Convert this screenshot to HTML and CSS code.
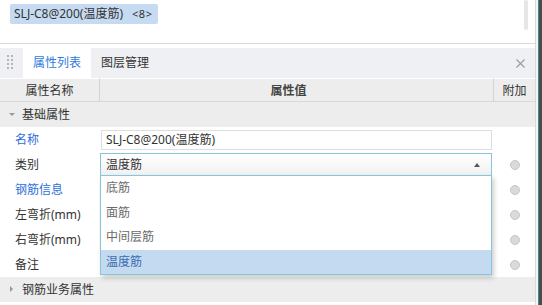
FILE: index.html
```html
<!DOCTYPE html>
<html lang="zh-CN">
<head>
  <meta charset="UTF-8" />
  <title>属性列表</title>
  <link rel="stylesheet" href="styles.css">
</head>
<body>

<div class="main">
  <div class="top">
    <span class="tag">SLJ-C8@200(温度筋)<span class="count">&lt;8&gt;</span></span>
    <span class="scroll-thumb"></span>
  </div>

  <div class="panel">
    <div class="tabbar">
      <svg class="grip" width="6" height="16" viewBox="0 0 6 16">
        <rect x="0" y="0" width="2" height="2"/><rect x="4" y="0" width="2" height="2"/>
        <rect x="0" y="4" width="2" height="2"/><rect x="4" y="4" width="2" height="2"/>
        <rect x="0" y="8" width="2" height="2"/><rect x="4" y="8" width="2" height="2"/>
        <rect x="0" y="12" width="2" height="2"/><rect x="4" y="12" width="2" height="2"/>
      </svg>
      <span class="tab active">属性列表</span>
      <span class="tab">图层管理</span>
      <svg class="close" width="9" height="9" viewBox="0 0 9 9">
        <path d="M0.5 0.5 L8.5 8.5 M8.5 0.5 L0.5 8.5" stroke="#9a9a9a" stroke-width="1.1" fill="none"/>
      </svg>
    </div>

    <div class="grid">
      <div class="hd">属性名称</div>
      <div class="hd hd-mid">属性值</div>
      <div class="hd hd-last">附加</div>

      <div class="group"><span class="arrow down"></span>基础属性</div>

      <div class="label blue">名称</div>
      <div class="value"><div class="input">SLJ-C8@200(温度筋)</div></div>
      <div class="extra"></div>

      <div class="label">类别</div>
      <div class="value">
        <div class="select-wrap">
          <div class="select">温度筋<span class="caret"></span></div>
          <ul class="dropdown">
            <li>底筋</li>
            <li>面筋</li>
            <li>中间层筋</li>
            <li class="selected">温度筋</li>
          </ul>
        </div>
      </div>
      <div class="extra"><span class="radio"></span></div>

      <div class="label blue">钢筋信息</div>
      <div class="value"></div>
      <div class="extra"><span class="radio"></span></div>

      <div class="label">左弯折(mm)</div>
      <div class="value"></div>
      <div class="extra"><span class="radio"></span></div>

      <div class="label">右弯折(mm)</div>
      <div class="value"></div>
      <div class="extra"><span class="radio"></span></div>

      <div class="label">备注</div>
      <div class="value"></div>
      <div class="extra"><span class="radio"></span></div>

      <div class="group"><span class="arrow right"></span>钢筋业务属性</div>
    </div>
  </div>
</div>
<div class="strip"></div>

</body>
</html>
```

FILE: styles.css
```css
:root {
  --text: #333333;
  --blue: #2e6fd8;
  --line: #d9d9d9;
  --head-bg: #ededed;
  --tab-bg: #eef0f3;
  --focus: #86c6dc;
}

body {
  margin: 0;
  display: flex;
  height: 305px;
  overflow: hidden;
  font-family: "Noto Sans", "Noto Sans CJK SC", sans-serif;
  font-size: 12px;
  color: var(--text);
  background: #f4f4f4;
}

.main {
  width: 535px;
  background: #fff;
  border-right: 1px solid var(--line);
  display: flex;
  flex-direction: column;
}

.strip {
  width: 4px;
  margin-left: 2px;
  background: #4a4c4c;
  border-left: 1px solid #3e8f8c;
}

.top {
  height: 43px;
  border-bottom: 1px solid var(--line);
  display: flex;
  align-items: flex-start;
  padding: 0 7px 0 10px;
}

.tag {
  margin-top: 4px;
  height: 20px;
  line-height: 20px;
  padding: 0 6px 0 4px;
  background: #c6dbf1;
  border-radius: 2px;
  color: #333;
  white-space: nowrap;
}

.count {
  margin-left: 9px;
  font-size: 11px;
  letter-spacing: 0.5px;
}

.scroll-thumb {
  margin-left: auto;
  width: 4px;
  height: 30px;
  background: #e6e6e6;
  border-radius: 2px;
}

.panel {
  margin-top: 4px;
  flex: 1;
  position: relative;
}

.tabbar {
  height: 30px;
  background: var(--tab-bg);
  display: flex;
  align-items: center;
  padding-left: 7px;
  padding-right: 10px;
}

.grip {
  fill: #b5b5b5;
  margin-right: 10px;
}

.tab {
  height: 30px;
  line-height: 30px;
  padding: 0 10px;
  color: var(--text);
}

.tab.active {
  background: #fff;
  color: #2f7be0;
}

.close {
  margin-left: auto;
}

.grid {
  display: grid;
  grid-template-columns: 100px 394px 41px;
  grid-template-rows: 24px;
  grid-auto-rows: 25px;
}

.hd {
  line-height: 23px;
  background: var(--head-bg);
  text-align: center;
  border-top: 1px solid #fff;
  border-bottom: 1px solid #d8d8d8;
  border-right: 1px solid #d4d4d4;
  box-sizing: border-box;
}

.hd-last {
  border-right: none;
}

.hd-mid {
  font-weight: bold;
  color: #444;
  padding-right: 16px;
}

.group {
  grid-column: 1 / -1;
  background: var(--head-bg);
  line-height: 25px;
  padding-left: 22px;
  position: relative;
}

.arrow {
  position: absolute;
  left: 9px;
  top: 11px;
  width: 0;
  height: 0;
}

.arrow.down {
  border-left: 3px solid transparent;
  border-right: 3px solid transparent;
  border-top: 3px solid #999;
}

.arrow.right {
  left: 10px;
  top: 9px;
  border-top: 3px solid transparent;
  border-bottom: 3px solid transparent;
  border-left: 3px solid #999;
}

.label {
  line-height: 25px;
  padding-left: 15px;
  white-space: nowrap;
}

.label.blue {
  color: var(--blue);
}

.value {
  padding: 0 2px 0 0;
  display: flex;
  align-items: center;
}

.input {
  flex: 1;
  margin-left: 1px;
  height: 18px;
  line-height: 18px;
  border: 1px solid #dedede;
  padding-left: 4px;
  color: #333;
}

.select-wrap {
  flex: 1;
  position: relative;
}

.select {
  height: 21px;
  line-height: 21px;
  border: 1px solid var(--focus);
  padding-left: 5px;
  background: linear-gradient(#ffffff, #f1f1f1);
  position: relative;
}

.caret {
  position: absolute;
  right: 11px;
  top: 9px;
  border-left: 3px solid transparent;
  border-right: 3px solid transparent;
  border-bottom: 4px solid #555;
}

.dropdown {
  position: absolute;
  left: 0;
  right: 0;
  top: 22px;
  margin: 0;
  padding: 0;
  list-style: none;
  background: #fff;
  border: 1px solid var(--focus);
  box-shadow: 2px 3px 5px rgba(0, 0, 0, 0.2);
  z-index: 2;
}

.dropdown li {
  height: 24.5px;
  line-height: 24px;
  padding-left: 5px;
  color: #6a6a6a;
}

.dropdown li.selected {
  background: #c3daf0;
  color: #3a6db0;
}

.extra {
  display: flex;
  align-items: center;
  justify-content: center;
}

.radio {
  width: 8px;
  height: 8px;
  border-radius: 50%;
  background: #dadada;
  border: 1px solid #c6c6c6;
}
```
